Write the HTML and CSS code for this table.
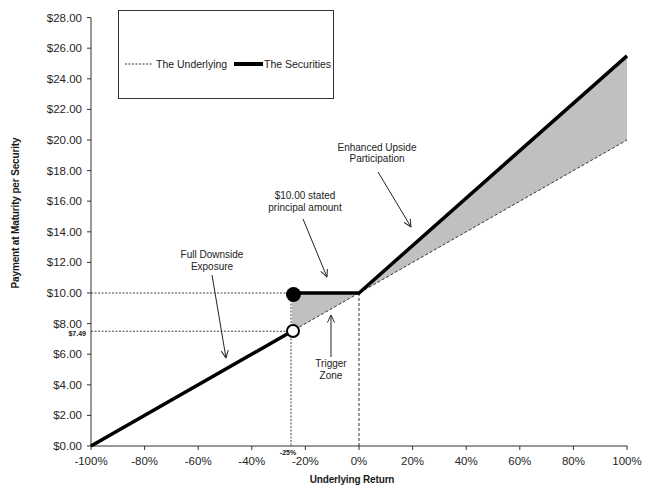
FILE: index.html
```html
<!DOCTYPE html>
<html>
<head>
<meta charset="utf-8">
<link rel="stylesheet" href="styles.css">
</head>
<body>
<div class="chart">
<svg class="plot" width="648" height="496" viewBox="0 0 648 496" xmlns="http://www.w3.org/2000/svg">
  <defs>
    <marker id="ah" viewBox="0 0 10 10" refX="9.5" refY="5" markerWidth="8" markerHeight="8" markerUnits="userSpaceOnUse" orient="auto">
      <path d="M0,0.5 L9.5,5 L0,9.5" class="arrowhead"/>
    </marker>
  </defs>

  <!-- gray participation area -->
  <polygon class="area" points="292,293 359,293 627,55.85 627,140 292,331.25"/>

  <!-- guide lines -->
  <line class="guide" x1="91" y1="293" x2="292" y2="293"/>
  <line class="guide" x1="91" y1="331.25" x2="292" y2="331.25"/>
  <line class="guide" x1="291" y1="300" x2="291" y2="446"/>
  <line class="guide2" x1="359" y1="293" x2="359" y2="446"/>

  <!-- axes -->
  <line class="axis" x1="91" y1="17.6" x2="91" y2="446.5"/>
  <line class="axis" x1="90.5" y1="446" x2="627.5" y2="446"/>

  <!-- y ticks -->
  <g class="axis">
    <line x1="87" y1="446" x2="91" y2="446"/>
    <line x1="87" y1="415.4" x2="91" y2="415.4"/>
    <line x1="87" y1="384.8" x2="91" y2="384.8"/>
    <line x1="87" y1="354.2" x2="91" y2="354.2"/>
    <line x1="87" y1="323.6" x2="91" y2="323.6"/>
    <line x1="87" y1="293" x2="91" y2="293"/>
    <line x1="87" y1="262.4" x2="91" y2="262.4"/>
    <line x1="87" y1="231.8" x2="91" y2="231.8"/>
    <line x1="87" y1="201.2" x2="91" y2="201.2"/>
    <line x1="87" y1="170.6" x2="91" y2="170.6"/>
    <line x1="87" y1="140" x2="91" y2="140"/>
    <line x1="87" y1="109.4" x2="91" y2="109.4"/>
    <line x1="87" y1="78.8" x2="91" y2="78.8"/>
    <line x1="87" y1="48.2" x2="91" y2="48.2"/>
    <line x1="87" y1="17.6" x2="91" y2="17.6"/>
  </g>
  <!-- x ticks -->
  <g class="axis">
    <line x1="91" y1="446" x2="91" y2="450"/>
    <line x1="144.6" y1="446" x2="144.6" y2="450"/>
    <line x1="198.2" y1="446" x2="198.2" y2="450"/>
    <line x1="251.8" y1="446" x2="251.8" y2="450"/>
    <line x1="305.4" y1="446" x2="305.4" y2="450"/>
    <line x1="359" y1="446" x2="359" y2="450"/>
    <line x1="412.6" y1="446" x2="412.6" y2="450"/>
    <line x1="466.2" y1="446" x2="466.2" y2="450"/>
    <line x1="519.8" y1="446" x2="519.8" y2="450"/>
    <line x1="573.4" y1="446" x2="573.4" y2="450"/>
    <line x1="627" y1="446" x2="627" y2="450"/>
  </g>

  <!-- y labels -->
  <g class="ylabel">
    <text x="82" y="450">$0.00</text>
    <text x="82" y="419.4">$2.00</text>
    <text x="82" y="388.8">$4.00</text>
    <text x="82" y="358.2">$6.00</text>
    <text x="82" y="327.6">$8.00</text>
    <text x="82" y="297">$10.00</text>
    <text x="82" y="266.4">$12.00</text>
    <text x="82" y="235.8">$14.00</text>
    <text x="82" y="205.2">$16.00</text>
    <text x="82" y="174.6">$18.00</text>
    <text x="82" y="144">$20.00</text>
    <text x="82" y="113.4">$22.00</text>
    <text x="82" y="82.8">$24.00</text>
    <text x="82" y="52.2">$26.00</text>
    <text x="82" y="21.6">$28.00</text>
  </g>
  <!-- x labels -->
  <g class="xlabel">
    <text x="91" y="465">-100%</text>
    <text x="144.6" y="465">-80%</text>
    <text x="198.2" y="465">-60%</text>
    <text x="251.8" y="465">-40%</text>
    <text x="305.4" y="465">-20%</text>
    <text x="359" y="465">0%</text>
    <text x="412.6" y="465">20%</text>
    <text x="466.2" y="465">40%</text>
    <text x="519.8" y="465">60%</text>
    <text x="573.4" y="465">80%</text>
    <text x="627" y="465">100%</text>
  </g>

  <text class="small-bold end" x="86" y="335.5">$7.49</text>
  <text class="small-bold mid" x="288" y="455">-25%</text>

  <!-- axis titles -->
  <text class="title mid" x="352" y="482.5">Underlying Return</text>
  <text class="title mid" transform="translate(18.5,213) rotate(-90)" x="0" y="0">Payment at Maturity per Security</text>

  <!-- underlying (dashed) -->
  <line class="underlying" x1="91" y1="446" x2="627" y2="140"/>

  <!-- securities -->
  <polyline class="securities" points="91,446 292,331.25"/>
  <polyline class="securities" points="293,293 359,293 627,55.85"/>

  <!-- markers -->
  <circle class="dot-filled" cx="293.5" cy="294.5" r="7.5"/>
  <circle class="dot-open" cx="293" cy="331" r="6"/>

  <!-- annotations -->
  <g class="note">
    <text x="377" y="150.5">Enhanced Upside</text>
    <text x="377" y="162">Participation</text>
    <text x="305" y="198.5">$10.00 stated</text>
    <text x="305" y="210.5">principal amount</text>
    <text x="212" y="257.5">Full Downside</text>
    <text x="212" y="269.5">Exposure</text>
    <text x="331" y="366.5">Trigger</text>
    <text x="331" y="378.5">Zone</text>
  </g>
  <g class="pointer">
    <line x1="378" y1="172" x2="411" y2="227" marker-end="url(#ah)"/>
    <line x1="303" y1="219" x2="327" y2="277" marker-end="url(#ah)"/>
    <line x1="212" y1="275" x2="226" y2="358" marker-end="url(#ah)"/>
    <line x1="331" y1="357" x2="331" y2="315" marker-end="url(#ah)"/>
  </g>

  <!-- legend -->
  <rect class="legend-box" x="118.5" y="10.5" width="215" height="88"/>
  <line class="legend-dash" x1="125" y1="64" x2="153" y2="64"/>
  <text class="legend-text" x="156" y="68">The Underlying</text>
  <line class="legend-solid" x1="234" y1="64" x2="263" y2="64"/>
  <text class="legend-text" x="264" y="68">The Securities</text>
</svg>
</div>
</body>
</html>
```

FILE: styles.css
```css
html, body {
  margin: 0;
  padding: 0;
  background: #ffffff;
}

.chart {
  width: 648px;
  height: 496px;
  overflow: hidden;
}

.plot {
  display: block;
  font-family: "Liberation Sans", Arial, sans-serif;
}

.area {
  fill: #c0c0c0;
  stroke: none;
}

.guide {
  stroke: #444;
  stroke-width: 1;
  stroke-dasharray: 2 1.5;
  fill: none;
}

.guide2 {
  stroke: #333;
  stroke-width: 1;
  stroke-dasharray: 3 2;
  fill: none;
}

.axis line,
line.axis {
  stroke: #333;
  stroke-width: 1;
}

.ylabel text {
  font-size: 11.5px;
  fill: #262626;
  text-anchor: end;
}

.xlabel text {
  font-size: 11.5px;
  fill: #262626;
  text-anchor: middle;
}

.small-bold {
  font-size: 7px;
  font-weight: bold;
  fill: #1a1a1a;
}

.end {
  text-anchor: end;
}

.mid {
  text-anchor: middle;
}

.title {
  font-size: 10px;
  font-weight: bold;
  fill: #1a1a1a;
  letter-spacing: -0.15px;
}

.underlying {
  stroke: #333;
  stroke-width: 1;
  stroke-dasharray: 3 2;
  fill: none;
}

.securities {
  stroke: #000;
  stroke-width: 3.5;
  fill: none;
  stroke-linejoin: miter;
}

.dot-filled {
  fill: #000;
}

.dot-open {
  fill: #fff;
  stroke: #000;
  stroke-width: 2;
}

.note text {
  font-size: 10px;
  fill: #222;
  text-anchor: middle;
}

.pointer line {
  stroke: #222;
  stroke-width: 1;
}

.arrowhead {
  fill: none;
  stroke: #222;
  stroke-width: 1.2;
}

.legend-box {
  fill: #fff;
  stroke: #333;
  stroke-width: 1;
}

.legend-dash {
  stroke: #333;
  stroke-width: 1;
  stroke-dasharray: 2 1.5;
}

.legend-solid {
  stroke: #000;
  stroke-width: 4;
}

.legend-text {
  font-size: 10.5px;
  fill: #1a1a1a;
}
```
